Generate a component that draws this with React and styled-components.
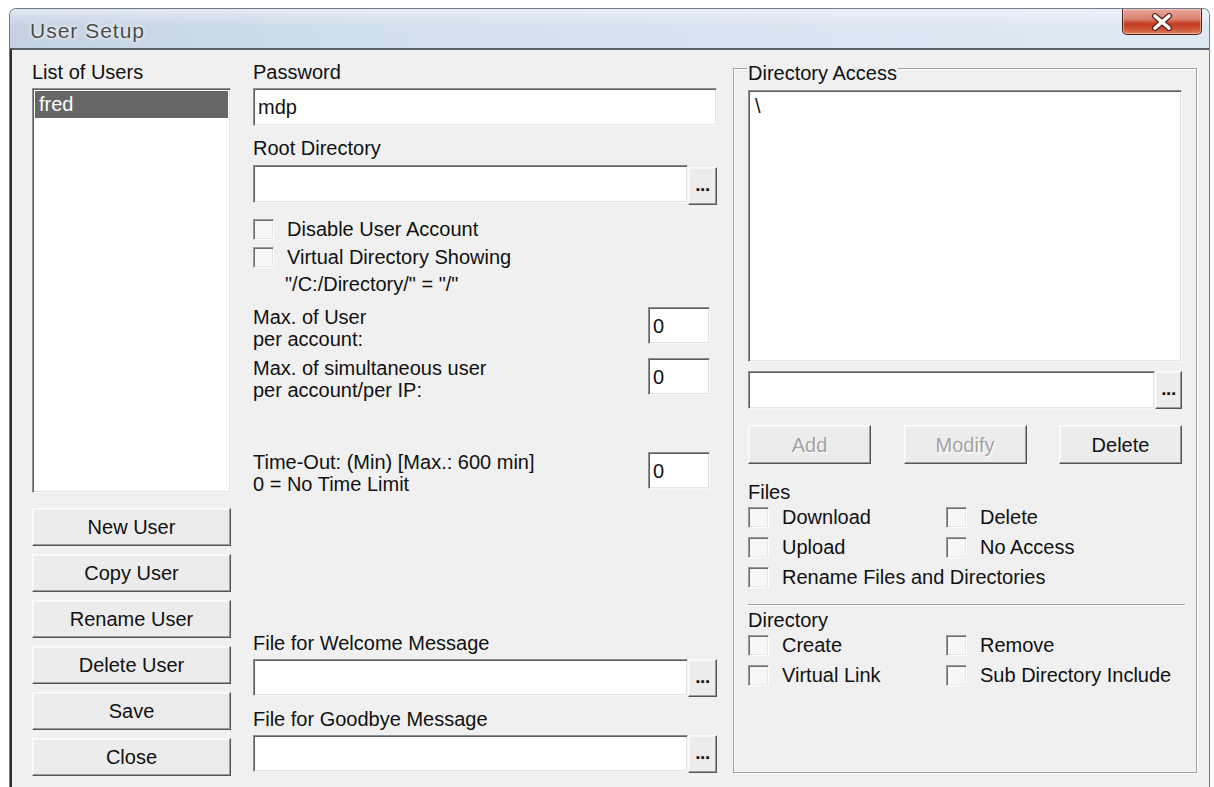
import React from "react";
import styled, { createGlobalStyle, css } from "styled-components";

const GlobalStyle = createGlobalStyle`
  html, body {
    margin: 0;
    padding: 0;
    background: #ffffff;
  }
  body {
    font-family: "Liberation Sans", Arial, sans-serif;
    color: #111;
  }
  *, *::before, *::after {
    box-sizing: border-box;
  }
`;

const sunken = css`
  background: #ffffff;
  border: 1px solid;
  border-color: #8e8e8e #f6f6f6 #f6f6f6 #8e8e8e;
  box-shadow: inset 1px 1px 0 #5e5e5e, inset -1px -1px 0 #e3e3e3;
`;

const raised = css`
  background: #ececec;
  border: 1px solid;
  border-color: #fcfcfc #555555 #555555 #fcfcfc;
  box-shadow: inset -1px -1px 0 #9a9a9a, inset 1px 1px 0 #f6f6f6;
`;

const Window = styled.div`
  margin: 8px 4px 0 9px;
  height: calc(100vh - 8px);
  display: flex;
  flex-direction: column;
  border: 1px solid #6d7b8c;
  border-bottom: none;
  border-radius: 7px 7px 0 0;
  overflow: hidden;
  background: #f0f0f0;
`;

const TitleBar = styled.div`
  height: 39px;
  flex: none;
  display: flex;
  align-items: flex-start;
  background:
    linear-gradient(180deg, rgba(255, 255, 255, 0.45) 0%, rgba(255, 255, 255, 0) 45%),
    linear-gradient(90deg, #c4d2e3 0%, #d1deeb 30%, #dae5f1 70%, #dfe9f4 100%);
`;

const Title = styled.span`
  margin: 11px 0 0 20px;
  font-size: 21px;
  line-height: 22px;
  letter-spacing: 1px;
  color: #4a4a4a;
  text-shadow: 0 0 5px #ffffff, 0 0 2px #ffffff;
`;

const CloseButton = styled.div`
  margin-left: auto;
  margin-right: 7px;
  width: 80px;
  height: 26px;
  display: flex;
  align-items: center;
  justify-content: center;
  border: 1px solid #4f2019;
  border-top: none;
  border-radius: 0 0 5px 5px;
  background: linear-gradient(
    180deg,
    #e7a99d 0%,
    #d9816f 40%,
    #c23a22 60%,
    #d25a3c 85%,
    #e08a68 100%
  );
  box-shadow: inset 0 0 0 1px rgba(255, 220, 210, 0.5);
`;

const Client = styled.div`
  flex: 1;
  display: flex;
  border-top: 2px solid #58606a;
  border-left: 2px solid #2f2f2f;
  padding-left: 20px;
  background: #f0f0f0;
  font-size: 20px;
  line-height: 22px;
`;

const Column = styled.div`
  display: flex;
  flex-direction: column;
  width: ${(p) => p.$width}px;
  margin-left: ${(p) => p.$offset || 0}px;
  padding-top: ${(p) => (p.$top != null ? p.$top : 11)}px;
  padding-bottom: ${(p) => p.$bottom || 0}px;
`;

const Label = styled.div`
  line-height: 22px;
  margin-top: ${(p) => p.$gap || 0}px;
  margin-bottom: 5px;
  white-space: nowrap;
`;

const ListBox = styled.div`
  ${sunken};
  width: ${(p) => (p.$width ? `${p.$width}px` : "100%")};
  height: ${(p) => p.$height}px;
  padding: 2px;
`;

const ListItem = styled.div`
  height: 27px;
  line-height: 27px;
  padding-left: 4px;
  color: ${(p) => (p.$selected ? "#ffffff" : "#111")};
  background: ${(p) => (p.$selected ? "#666666" : "transparent")};
`;

const ButtonStack = styled.div`
  display: flex;
  flex-direction: column;
  gap: 8px;
  margin-top: 15px;
`;

const Button = styled.div`
  ${raised};
  width: ${(p) => (p.$width ? `${p.$width}px` : "100%")};
  height: ${(p) => p.$height || 38}px;
  display: flex;
  align-items: center;
  justify-content: center;
  font-size: 20px;
  color: ${(p) => (p.$disabled ? "#a3a3a3" : "#111")};
  text-shadow: ${(p) => (p.$disabled ? "1px 1px 0 #ffffff" : "none")};
`;

const TextInput = styled.div`
  ${sunken};
  width: ${(p) => (p.$width ? `${p.$width}px` : "100%")};
  height: ${(p) => p.$height || 38}px;
  padding: 0 4px;
  display: flex;
  align-items: center;
  flex: none;
`;

const FieldRow = styled.div`
  display: flex;
  align-items: flex-start;
  margin-top: ${(p) => p.$gap || 0}px;
`;

const BrowseButton = styled.div`
  ${raised};
  width: ${(p) => p.$width || 29}px;
  height: 38px;
  margin-top: ${(p) => p.$drop || 0}px;
  display: flex;
  align-items: center;
  justify-content: center;
  font-size: 19px;
  line-height: 19px;
  font-weight: bold;
  letter-spacing: -0.5px;
  padding-bottom: 4px;
  flex: none;
`;

const CheckRow = styled.label`
  display: flex;
  align-items: center;
  gap: 13px;
  height: ${(p) => p.$height || 28}px;
  margin-top: ${(p) => p.$gap || 0}px;
  white-space: nowrap;
`;

const CheckBox = styled.span`
  width: 21px;
  height: 21px;
  flex: none;
  background: #f7f7f7;
  border: 1px solid;
  border-color: #9a9a9a #ffffff #ffffff #9a9a9a;
  box-shadow: inset 1px 1px 0 #6e6e6e, inset -1px -1px 0 #e6e6e6;
`;

const Note = styled.div`
  margin: 2px 0 0 32px;
  line-height: 22px;
  white-space: nowrap;
`;

const LimitRow = styled.div`
  display: flex;
  align-items: flex-start;
  margin-top: ${(p) => p.$gap}px;
`;

const LimitText = styled.div`
  flex: 1;
  line-height: 22px;
`;

const NumberBox = styled(TextInput)`
  width: 62px;
  height: 37px;
  margin: 1px 7px 0 0;
  padding-left: 4px;
`;

const BottomFields = styled.div`
  margin-top: auto;
  display: flex;
  flex-direction: column;
`;

const GroupBox = styled.div`
  position: relative;
  flex: 1;
  margin-top: 18px;
  border: 1px solid #a0a0a0;
  box-shadow: 1px 1px 0 #ffffff, inset 1px 1px 0 #ffffff;
  padding: 21px 0 0 14px;
`;

const GroupTitle = styled.span`
  position: absolute;
  top: -7px;
  left: 13px;
  padding: 0 1px;
  line-height: 22px;
  background: #f0f0f0;
`;

const ButtonRow = styled.div`
  display: flex;
  justify-content: space-between;
  width: 434px;
  margin-top: 16px;
`;

const SectionLabel = styled.div`
  line-height: 20px;
  margin-top: ${(p) => p.$gap}px;
`;

const CheckGrid = styled.div`
  display: grid;
  grid-template-columns: 198px auto;
  grid-auto-rows: 30px;
  width: 434px;
`;

const Wide = styled.div`
  grid-column: 1 / -1;
`;

const Separator = styled.div`
  width: 437px;
  height: 2px;
  margin-top: 12px;
  border-top: 1px solid #a0a0a0;
  border-bottom: 1px solid #ffffff;
`;

function CloseGlyph() {
  return (
    <svg width="24" height="18" viewBox="0 0 24 18">
      <path
        d="M5 3 L19 15 M19 3 L5 15"
        stroke="#5b2117"
        strokeWidth="6"
        strokeLinecap="round"
        fill="none"
      />
      <path
        d="M5 3 L19 15 M19 3 L5 15"
        stroke="#ffffff"
        strokeWidth="3.6"
        strokeLinecap="round"
        fill="none"
      />
    </svg>
  );
}

function Check({ children, height, gap }) {
  return (
    <CheckRow $height={height} $gap={gap}>
      <CheckBox />
      <span>{children}</span>
    </CheckRow>
  );
}

const userButtons = ["New User", "Copy User", "Rename User", "Delete User", "Save", "Close"];

export default function App() {
  return (
    <>
      <GlobalStyle />
      <Window>
        <TitleBar>
          <Title>User Setup</Title>
          <CloseButton>
            <CloseGlyph />
          </CloseButton>
        </TitleBar>

        <Client>
          {/* users list and actions */}
          <Column $width={199}>
            <Label>List of Users</Label>
            <ListBox $height={405}>
              <ListItem $selected>fred</ListItem>
            </ListBox>
            <ButtonStack>
              {userButtons.map((b) => (
                <Button key={b}>{b}</Button>
              ))}
            </ButtonStack>
          </Column>

          {/* account settings */}
          <Column $width={464} $offset={22} $bottom={14}>
            <Label>Password</Label>
            <TextInput>mdp</TextInput>
            <Label $gap={11}>Root Directory</Label>
            <FieldRow $gap={1}>
              <TextInput $width={435} />
              <BrowseButton $drop={2}>...</BrowseButton>
            </FieldRow>
            <Check gap={10}>Disable User Account</Check>
            <Check>Virtual Directory Showing</Check>
            <Note>"/C:/Directory/" = "/"</Note>

            <LimitRow $gap={11}>
              <LimitText>
                Max. of User
                <br />
                per account:
              </LimitText>
              <NumberBox>0</NumberBox>
            </LimitRow>
            <LimitRow $gap={7}>
              <LimitText>
                Max. of simultaneous user
                <br />
                per account/per IP:
              </LimitText>
              <NumberBox>0</NumberBox>
            </LimitRow>
            <LimitRow $gap={50}>
              <LimitText>
                Time-Out: (Min) [Max.: 600 min]
                <br />0 = No Time Limit
              </LimitText>
              <NumberBox>0</NumberBox>
            </LimitRow>

            <BottomFields>
              <Label>File for Welcome Message</Label>
              <FieldRow>
                <TextInput $width={435} $height={37} />
                <BrowseButton>...</BrowseButton>
              </FieldRow>
              <Label $gap={11}>File for Goodbye Message</Label>
              <FieldRow>
                <TextInput $width={435} $height={37} />
                <BrowseButton>...</BrowseButton>
              </FieldRow>
            </BottomFields>
          </Column>

          {/* directory permissions */}
          <Column $width={464} $offset={16} $top={0} $bottom={14}>
            <GroupBox>
              <GroupTitle>Directory Access</GroupTitle>
              <ListBox $width={434} $height={272}>
                <ListItem>\</ListItem>
              </ListBox>
              <FieldRow $gap={9}>
                <TextInput $width={407} />
                <BrowseButton $width={27}>...</BrowseButton>
              </FieldRow>
              <ButtonRow>
                <Button $width={123} $height={39} $disabled>
                  Add
                </Button>
                <Button $width={123} $height={39} $disabled>
                  Modify
                </Button>
                <Button $width={123} $height={39}>
                  Delete
                </Button>
              </ButtonRow>

              <SectionLabel $gap={18}>Files</SectionLabel>
              <CheckGrid>
                <Check height={30}>Download</Check>
                <Check height={30}>Delete</Check>
                <Check height={30}>Upload</Check>
                <Check height={30}>No Access</Check>
                <Wide>
                  <Check height={30}>Rename Files and Directories</Check>
                </Wide>
              </CheckGrid>

              <Separator />

              <SectionLabel $gap={4}>Directory</SectionLabel>
              <CheckGrid>
                <Check height={30}>Create</Check>
                <Check height={30}>Remove</Check>
                <Check height={30}>Virtual Link</Check>
                <Check height={30}>Sub Directory Include</Check>
              </CheckGrid>
            </GroupBox>
          </Column>
        </Client>
      </Window>
    </>
  );
}
